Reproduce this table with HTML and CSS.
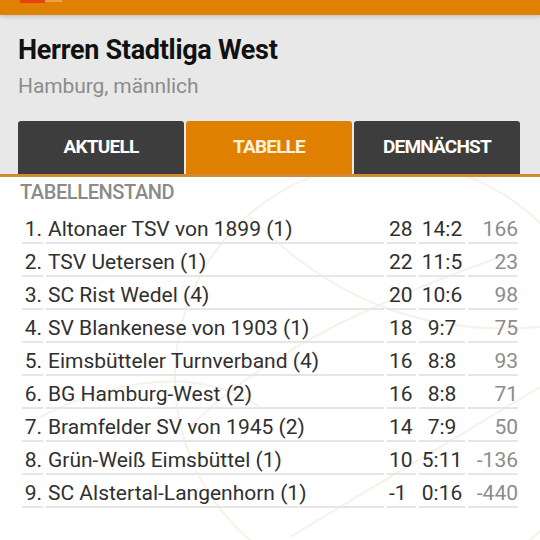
FILE: index.html
```html
<!DOCTYPE html>
<html lang="de">
<head>
<meta charset="utf-8">
<title>Herren Stadtliga West</title>
<link rel="stylesheet" href="styles.css">
</head>
<body>
<div class="topbar">
  <div class="logo"><span class="logo-red"></span><span class="logo-light"></span></div>
</div>
<header class="header">
  <h1 class="title">Herren Stadtliga West</h1>
  <div class="subtitle">Hamburg, männlich</div>
  <nav class="tabs">
    <div class="tab">AKTUELL</div>
    <div class="tab active">TABELLE</div>
    <div class="tab">DEMNÄCHST</div>
  </nav>
</header>
<main class="content">
  <svg class="watermark" width="540" height="370" viewBox="0 0 540 370" aria-hidden="true">
    <g fill="none" stroke="#f6f2ea" stroke-width="2">
      <circle cx="390" cy="200" r="215"/>
      <path d="M250 40 C 330 120, 420 160, 540 150"/>
      <path d="M190 250 C 260 180, 360 130, 500 80"/>
      <path d="M290 360 L 540 210"/>
      <path d="M40 240 C 120 200, 200 190, 260 230"/>
    </g>
  </svg>
  <h2 class="section">TABELLENSTAND</h2>
  <table class="standings">
    <tbody>
      <tr><td class="rank">1.</td><td class="name">Altonaer TSV von 1899 (1)</td><td class="pts">28</td><td class="games">14:2</td><td class="diff">166</td></tr>
      <tr><td class="rank">2.</td><td class="name">TSV Uetersen (1)</td><td class="pts">22</td><td class="games">11:5</td><td class="diff">23</td></tr>
      <tr><td class="rank">3.</td><td class="name">SC Rist Wedel (4)</td><td class="pts">20</td><td class="games">10:6</td><td class="diff">98</td></tr>
      <tr><td class="rank">4.</td><td class="name">SV Blankenese von 1903 (1)</td><td class="pts">18</td><td class="games">9:7</td><td class="diff">75</td></tr>
      <tr><td class="rank">5.</td><td class="name">Eimsbütteler Turnverband (4)</td><td class="pts">16</td><td class="games">8:8</td><td class="diff">93</td></tr>
      <tr><td class="rank">6.</td><td class="name">BG Hamburg-West (2)</td><td class="pts">16</td><td class="games">8:8</td><td class="diff">71</td></tr>
      <tr><td class="rank">7.</td><td class="name">Bramfelder SV von 1945 (2)</td><td class="pts">14</td><td class="games">7:9</td><td class="diff">50</td></tr>
      <tr><td class="rank">8.</td><td class="name">Grün-Weiß Eimsbüttel (1)</td><td class="pts">10</td><td class="games">5:11</td><td class="diff">-136</td></tr>
      <tr><td class="rank">9.</td><td class="name">SC Alstertal-Langenhorn (1)</td><td class="pts">-1</td><td class="games">0:16</td><td class="diff">-440</td></tr>
    </tbody>
  </table>
</main>
</body>
</html>
```

FILE: styles.css
```css
* { box-sizing: border-box; }

html, body {
  margin: 0;
  padding: 0;
  background: #ffffff;
  font-family: Roboto, "Noto Sans", "Liberation Sans", sans-serif;
  color: #303030;
  height: 540px;
  overflow: hidden;
}

.topbar {
  height: 15px;
  background: #df8200;
  position: relative;
  z-index: 2;
  box-shadow: 0 1px 5px rgba(0, 0, 0, 0.22);
}

.logo {
  display: flex;
  padding-left: 20px;
}

.logo-red {
  width: 25px;
  height: 3px;
  background: #e8420c;
}

.logo-light {
  width: 17px;
  height: 2px;
  background: #eaa24a;
}

.header {
  background: #e8e8e8;
  padding: 20px 0 0 0;
  border-bottom: 3px solid #cf8a36;
}

.title {
  margin: 0;
  padding-left: 18px;
  font-size: 27px;
  font-weight: 700;
  line-height: 30px;
  color: #111111;
  letter-spacing: -0.3px;
}

.subtitle {
  padding-left: 18px;
  margin-top: 9px;
  font-size: 21px;
  line-height: 24px;
  color: #8c8c8c;
  letter-spacing: -0.1px;
}

.tabs {
  display: flex;
  gap: 2px;
  padding: 0 20px 0 18px;
  margin-top: 23px;
}

.tab {
  flex: 1;
  height: 53px;
  background: #3d3d3d;
  color: #ffffff;
  border-radius: 3px 3px 0 0;
  display: flex;
  align-items: center;
  justify-content: center;
  font-size: 19px;
  font-weight: 700;
  letter-spacing: -0.8px;
  padding-bottom: 3px;
}

.tab.active {
  background: #e08000;
  color: #fff1da;
}

.content {
  position: relative;
  padding: 3px 0 0 0;
}

.watermark {
  position: absolute;
  left: 0;
  top: 0;
  z-index: 0;
}

.section {
  position: relative;
  margin: 0;
  padding-left: 20px;
  font-size: 20px;
  font-weight: 500;
  line-height: 24px;
  color: #8a8a8a;
  letter-spacing: -0.4px;
}

.standings {
  position: relative;
  margin-left: 19px;
  margin-top: 7px;
  border-collapse: separate;
  border-spacing: 3px 0;
  font-size: 21px;
  line-height: 24px;
}

.standings td {
  height: 33px;
  padding: 6px 0 0 0;
  vertical-align: top;
  border-bottom: 2px solid #e6e6e6;
  white-space: nowrap;
}

.standings td.rank {
  width: 21px;
  text-align: right;
  padding-right: 1px;
}

.standings td.name {
  width: 338px;
  padding-left: 2px;
}

.standings td.pts {
  width: 29px;
  padding-left: 2px;
}

.standings td.games {
  width: 46px;
  text-align: center;
}

.standings td.diff {
  width: 50px;
  text-align: right;
  color: #8c8c8c;
}
```
